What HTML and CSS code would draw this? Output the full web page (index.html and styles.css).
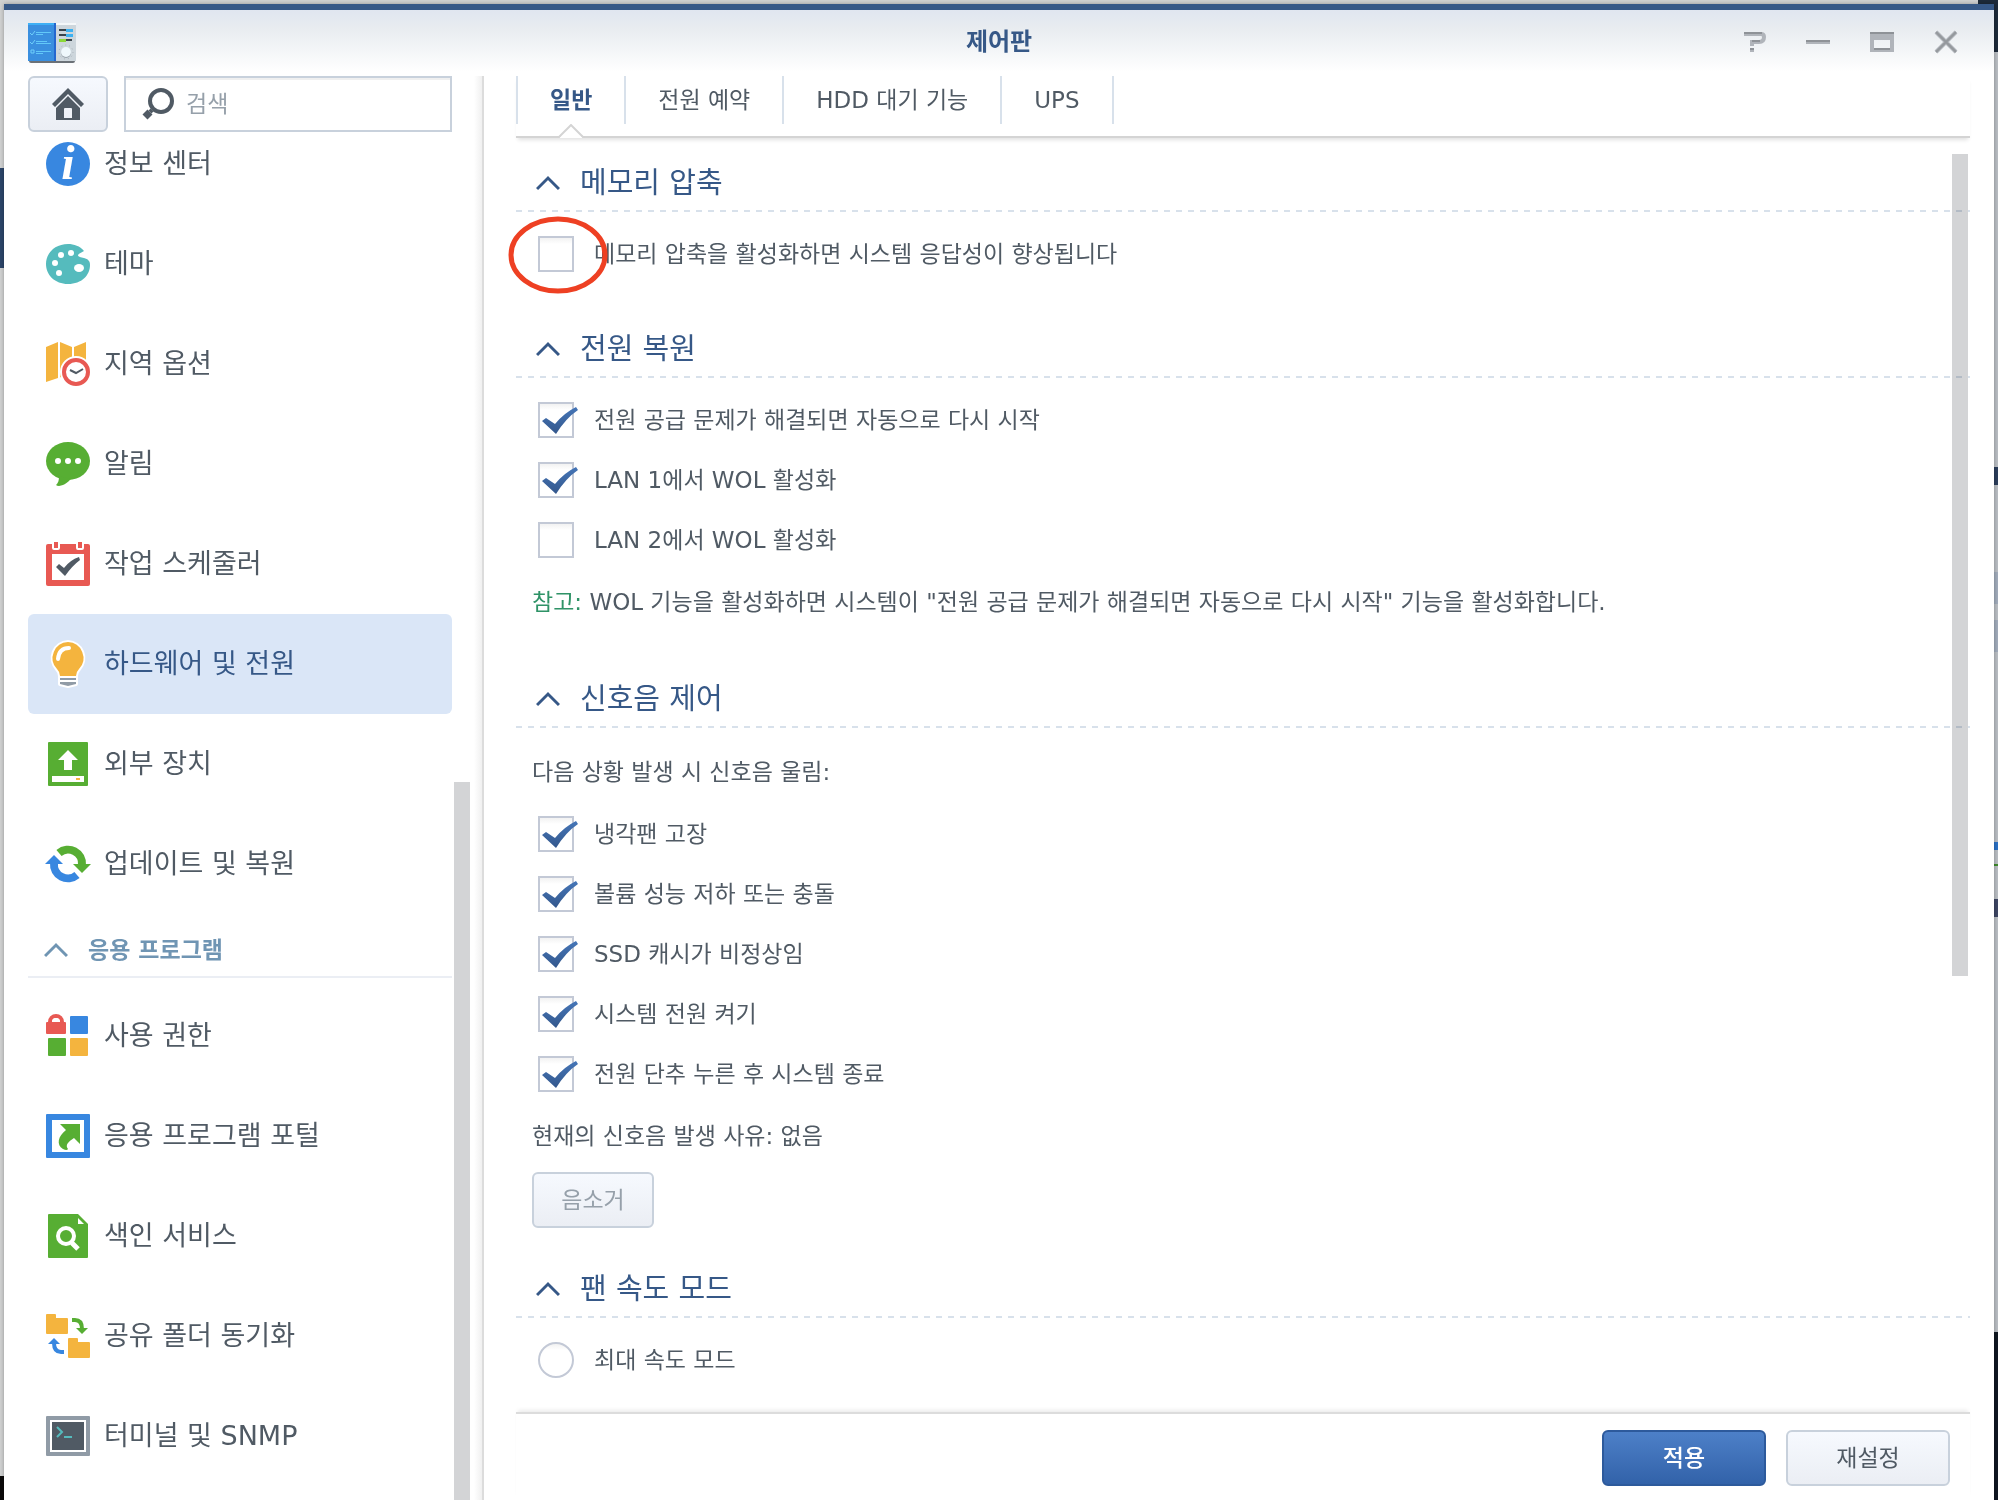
FILE: index.html
```
<!DOCTYPE html>
<html lang="ko">
<head>
    <meta charset="UTF-8">
    <meta name="viewport" content="width=device-width, initial-scale=1.0">
    <title>제어판</title>
    <link rel="stylesheet" href="styles.css">
</head>
<body>
    <div class="desktop">
        <div class="window">
            <header class="titlebar">
                <svg class="app-icon" width="48" height="38" viewBox="0 0 48 38">
                    <rect x="1" y="36" width="46" height="4" rx="2" fill="#6b7177"/>
                    <rect width="28" height="38" fill="#3a8fdf"/>
                    <rect width="28" height="2" fill="#3fb0f5"/>
                    <rect x="26" width="2" height="38" fill="#2467cf"/>
                    <rect x="28" width="20" height="38" fill="#cdd6dc"/>
                    <rect x="28" width="20" height="2" fill="#f5f8fa"/>
                    <path d="M2 10l2 2 3-4M2 19l2 2 3-4" fill="none" stroke="#6fd0fa"/>
                    <path d="M3 27h3v3h-3z" fill="none" stroke="#6fd0fa"/>
                    <path d="M8 9.500h15M8 11.500h7M8 18.500h11M8 20.500h15M8 28.500h15M8 30.500h7" stroke="#62c8f8"/>
                    <path d="M31 7h7M31 12h7M38 17h6" stroke="#39434b" stroke-width="2"/>
                    <path d="M38 7.500h7M38 12.500h7" stroke="#3db2f2" stroke-width="3"/>
                    <path d="M31 17.500h7" stroke="#8bd83a" stroke-width="3"/>
                    <circle cx="38" cy="29" r="7" fill="none" stroke="#a9b3ba" stroke-dasharray="1 3"/>
                    <circle cx="38" cy="30" r="5" fill="#9aa5ad"/>
                    <circle cx="38" cy="29" r="5" fill="#eff8fc"/>
                </svg>
                <h1 class="title">제어판</h1>
                <div class="window-controls">
                    <button type="button" aria-label="도움말">
                        <svg width="24" height="24" viewBox="0 0 24 24" fill="none">
                            <path d="M2 4h17q3 0 3 3v0q0 5-5 5h-7v4M10 18v4" stroke="#b0b4ba" stroke-width="4"/>
                            <path d="M2 3h18M10 11h8M8 19h4" stroke="#8e9297" stroke-width="2"/>
                        </svg>
                    </button>
                    <button type="button" aria-label="최소화">
                        <svg width="24" height="24" viewBox="0 0 24 24">
                            <path d="M0 12h24" stroke="#b0b4ba" stroke-width="4"/>
                            <path d="M0 11h24" stroke="#8e9297" stroke-width="2"/>
                        </svg>
                    </button>
                    <button type="button" aria-label="최대화">
                        <svg width="24" height="24" viewBox="0 0 24 24">
                            <path d="M0 2h24v20H0zM4 10v8h16v-8z" fill="#b0b4ba" fill-rule="evenodd"/>
                            <path d="M0 3h24M4 19h16" stroke="#8e9297" stroke-width="2"/>
                        </svg>
                    </button>
                    <button type="button" aria-label="닫기">
                        <svg width="24" height="24" viewBox="0 0 24 24" fill="none">
                            <path d="M2 2l20 20M22 2L2 22" stroke="#b0b4ba" stroke-width="4"/>
                            <path d="M2 2l20 20M22 2L2 22" stroke="#94989d" stroke-width="2"/>
                        </svg>
                    </button>
                </div>
            </header>

            <div class="body">
                <aside class="sidebar">
                    <div class="search-row">
                        <button type="button" class="btn home" aria-label="홈">
                            <svg width="32" height="32" viewBox="0 0 32 32" fill="#505a64">
                                <path d="M0 16L16 0L32 16L29 19L16 6L3 19z"/>
                                <path d="M4 20L16 8L28 20V32H4zM12 21v9h8v-9q0-1-1-1h-6q-1 0-1 1z" fill-rule="evenodd"/>
                            </svg>
                        </button>
                        <label class="search">
                            <svg width="32" height="32" viewBox="0 0 32 32" fill="none" stroke="#505a64">
                                <circle cx="19" cy="13" r="11" stroke-width="4"/>
                                <path d="M10 22L8 24" stroke-width="4"/>
                                <path d="M8 24L3 29" stroke-width="7"/>
                            </svg>
                            <input type="text" placeholder="검색" aria-label="검색">
                        </label>
                    </div>

                    <nav class="menu">
                        <a href="#" class="menu-item">
                            <svg class="icon" viewBox="0 0 44 44">
                                <circle cx="22" cy="22" r="22" fill="#3887e0"/>
                                <text x="22" y="37" class="info-letter">i</text>
                            </svg>
                            <span>정보 센터</span>
                        </a>
                        <a href="#" class="menu-item">
                            <svg class="icon" viewBox="0 0 44 44">
                                <path d="M38 9C34 4 28 2 22 2C9 2 0 11 0 22S9 42 22 42C36 42 44 33 44 23C44 19 42 17 38 16C35 15 32 15 32 13Q32 12 38 9z" fill="#55bbbd"/>
                                <g fill="#fff">
                                    <circle cx="9" cy="21" r="3"/>
                                    <circle cx="15" cy="13" r="3"/>
                                    <circle cx="25" cy="11" r="3"/>
                                    <circle cx="13" cy="31" r="3"/>
                                    <ellipse cx="33" cy="26" rx="5" ry="4"/>
                                </g>
                            </svg>
                            <span>테마</span>
                        </a>
                        <a href="#" class="menu-item">
                            <svg class="icon" viewBox="0 0 44 44">
                                <path d="M0 5L12 0V36L0 40zM14 0L26 5V40L14 35zM28 5L40 0V30H28z" fill="#f4b43e"/>
                                <path d="M14 36h14v8h-14z" fill="#fff"/>
                                <circle cx="30" cy="30" r="16" fill="#fff"/>
                                <circle cx="30" cy="30" r="12" fill="#fff" stroke="#e85953" stroke-width="4"/>
                                <path d="M24 28l6 3 7-4" fill="none" stroke="#505a64" stroke-width="2"/>
                            </svg>
                            <span>지역 옵션</span>
                        </a>
                        <a href="#" class="menu-item">
                            <svg class="icon" viewBox="0 0 44 44">
                                <ellipse cx="22" cy="19" rx="22" ry="19" fill="#57ae33"/>
                                <path d="M13 34C13 39 12 41 10 43Q11 44 13 44C19 43 22 40 25 37z" fill="#57ae33"/>
                                <path d="M12 19h0M22 19h0M32 19h0" stroke="#fff" stroke-width="6" stroke-linecap="round"/>
                            </svg>
                            <span>알림</span>
                        </a>
                        <a href="#" class="menu-item">
                            <svg class="icon" viewBox="0 0 44 44">
                                <rect y="2" width="44" height="42" rx="2" fill="#e85953"/>
                                <rect x="6" y="12" width="32" height="26" fill="#fff"/>
                                <path d="M6 0h8v6q0 2-2 2h-4q-2 0-2-2zM30 0h8v6q0 2-2 2h-4q-2 0-2-2z" fill="#fff"/>
                                <path d="M8 0h4v6h-4zM32 0h4v6h-4z" fill="#e85953"/>
                                <path d="M10 25L13 22L18 26Q24 18 33 15L34 18Q26 24 19 34z" fill="#505a64"/>
                            </svg>
                            <span>작업 스케줄러</span>
                        </a>
                        <a href="#" class="menu-item active">
                            <svg class="icon" viewBox="0 0 44 44">
                                <path d="M22 0a16 16 0 0 1 11 27q-3 3-3 7v8l-8 2-8-2v-8q0-4-3-7A16 16 0 0 1 22 0z" fill="#fff" stroke="#fff" stroke-width="4" stroke-linejoin="round"/>
                                <path d="M22 0a16 16 0 0 1 11 27q-3 3-3 7h-16q0-4-3-7A16 16 0 0 1 22 0z" fill="#f4b43e"/>
                                <path d="M12 17q1-11 11-11" fill="none" stroke="#fff" stroke-width="4" stroke-linecap="round"/>
                                <path d="M14 36h16v2h-16zM14 40h16v2l-8 2-8-2z" fill="#909ba6"/>
                            </svg>
                            <span>하드웨어 및 전원</span>
                        </a>
                        <a href="#" class="menu-item">
                            <svg class="icon" viewBox="0 0 44 44">
                                <rect x="2" width="40" height="44" rx="1" fill="#57ae33"/>
                                <path d="M22 8L32 18H26V28H18V18H12z" fill="#fff"/>
                                <path d="M6 34h32v6h-32z" fill="#fff"/>
                                <path d="M30 36h4v2h-4z" fill="#f4b43e"/>
                            </svg>
                            <span>외부 장치</span>
                        </a>
                        <a href="#" class="menu-item">
                            <svg class="icon" viewBox="0 0 44 44" fill="none" stroke-width="8">
                                <path d="M13 11A14 14 0 0 1 36 23" stroke="#57ae33"/>
                                <path d="M27 22H45L36 31z" fill="#57ae33"/>
                                <path d="M31 33A14 14 0 0 1 8 21" stroke="#3887e0"/>
                                <path d="M-1 22H17L8 13z" fill="#3887e0"/>
                            </svg>
                            <span>업데이트 및 복원</span>
                        </a>

                        <h2 class="menu-group">
                            <svg width="24" height="16" viewBox="0 0 24 16"><path d="M1 14L12 3L23 14"/></svg>
                            응용 프로그램
                        </h2>

                        <a href="#" class="menu-item">
                            <svg class="icon" viewBox="0 0 44 44">
                                <path d="M4 9V8a6 6 0 0 1 12 0v1" fill="none" stroke="#e85953" stroke-width="4"/>
                                <rect y="8" width="20" height="12" rx="1" fill="#e85953"/>
                                <path d="M6 8a4 4 0 0 1 8 0z" fill="#fff"/>
                                <rect x="24" y="2" width="18" height="18" rx="1" fill="#3887e0"/>
                                <rect x="2" y="24" width="18" height="18" rx="1" fill="#57ae33"/>
                                <rect x="24" y="24" width="18" height="18" rx="1" fill="#f4b43e"/>
                            </svg>
                            <span>사용 권한</span>
                        </a>
                        <a href="#" class="menu-item">
                            <svg class="icon" viewBox="0 0 44 44">
                                <rect width="44" height="44" rx="1" fill="#3887e0"/>
                                <rect x="6" y="6" width="32" height="32" fill="#fff"/>
                                <path d="M14 10H34V30L28 24C22 28 19 31 22 35Q21 37 17 35C10 31 12 22 20 16z" fill="#57ae33"/>
                            </svg>
                            <span>응용 프로그램 포털</span>
                        </a>
                        <a href="#" class="menu-item">
                            <svg class="icon" viewBox="0 0 44 44">
                                <path d="M3 0H32L42 10V43q0 1-1 1H3q-1 0-1-1V1q0-1 1-1z" fill="#57ae33"/>
                                <path d="M32 4V10H38z" fill="#fff"/>
                                <circle cx="20" cy="22" r="8" fill="none" stroke="#fff" stroke-width="4"/>
                                <path d="M26 29L32 35" stroke="#fff" stroke-width="5"/>
                            </svg>
                            <span>색인 서비스</span>
                        </a>
                        <a href="#" class="menu-item">
                            <svg class="icon" viewBox="0 0 44 44">
                                <path d="M1 0H9q1 0 1 1V4H21q1 0 1 1V19q0 1-1 1H1q-1 0-1-1V1q0-1 1-1zM23 24h8q1 0 1 1v3h11q1 0 1 1v14q0 1-1 1H23q-1 0-1-1V25q0-1 1-1z" fill="#f4b43e"/>
                                <path d="M26 6h3q7 0 7 9" fill="none" stroke="#57ae33" stroke-width="4"/>
                                <path d="M30 14H42L36 20z" fill="#57ae33"/>
                                <path d="M18 38h-3q-7 0-7-9" fill="none" stroke="#3887e0" stroke-width="4"/>
                                <path d="M2 30H14L8 24z" fill="#3887e0"/>
                            </svg>
                            <span>공유 폴더 동기화</span>
                        </a>
                        <a href="#" class="menu-item">
                            <svg class="icon" viewBox="0 0 44 44">
                                <rect y="2" width="44" height="40" rx="1" fill="#909ba6"/>
                                <rect x="4" y="6" width="36" height="32" fill="#fff"/>
                                <rect x="6" y="8" width="32" height="28" fill="#505a64"/>
                                <path d="M11 13l5 5-5 5M18 23h8" fill="none" stroke="#55bbbd" stroke-width="2"/>
                            </svg>
                            <span>터미널 및 SNMP</span>
                        </a>
                    </nav>
                    <div class="scroll-thumb"></div>
                </aside>

                <main class="content">
                    <nav class="tabs">
                        <a href="#" class="tab active">일반</a>
                        <a href="#" class="tab">전원 예약</a>
                        <a href="#" class="tab">HDD 대기 기능</a>
                        <a href="#" class="tab">UPS</a>
                    </nav>

                    <form class="panel" id="hardware">
                        <section>
                            <h2 class="section-title">
                                <svg width="24" height="16" viewBox="0 0 24 16"><path d="M1 14L12 3L23 14"/></svg>
                                메모리 압축
                            </h2>
                            <div class="fields">
                                <label class="option marked">
                                    <input type="checkbox">메모리 압축을 활성화하면 시스템 응답성이 향상됩니다
                                    <svg class="marker" width="100" height="78" viewBox="0 0 100 78">
                                        <ellipse cx="50" cy="39" rx="47" ry="36"/>
                                    </svg>
                                </label>
                            </div>
                        </section>

                        <section>
                            <h2 class="section-title">
                                <svg width="24" height="16" viewBox="0 0 24 16"><path d="M1 14L12 3L23 14"/></svg>
                                전원 복원
                            </h2>
                            <div class="fields">
                                <label class="option"><input type="checkbox" checked>전원 공급 문제가 해결되면 자동으로 다시 시작</label>
                                <label class="option"><input type="checkbox" checked>LAN 1에서 WOL 활성화</label>
                                <label class="option"><input type="checkbox">LAN 2에서 WOL 활성화</label>
                                <p><span class="note">참고:</span> WOL 기능을 활성화하면 시스템이 "전원 공급 문제가 해결되면 자동으로 다시 시작" 기능을 활성화합니다.</p>
                            </div>
                        </section>

                        <section>
                            <h2 class="section-title">
                                <svg width="24" height="16" viewBox="0 0 24 16"><path d="M1 14L12 3L23 14"/></svg>
                                신호음 제어
                            </h2>
                            <div class="fields">
                                <p>다음 상황 발생 시 신호음 울림:</p>
                                <label class="option"><input type="checkbox" checked>냉각팬 고장</label>
                                <label class="option"><input type="checkbox" checked>볼륨 성능 저하 또는 충돌</label>
                                <label class="option"><input type="checkbox" checked>SSD 캐시가 비정상임</label>
                                <label class="option"><input type="checkbox" checked>시스템 전원 켜기</label>
                                <label class="option"><input type="checkbox" checked>전원 단추 누른 후 시스템 종료</label>
                                <p>현재의 신호음 발생 사유: 없음</p>
                                <button type="button" class="btn mute" disabled>음소거</button>
                            </div>
                        </section>

                        <section>
                            <h2 class="section-title">
                                <svg width="24" height="16" viewBox="0 0 24 16"><path d="M1 14L12 3L23 14"/></svg>
                                팬 속도 모드
                            </h2>
                            <div class="fields">
                                <label class="option"><input type="radio" name="fan">최대 속도 모드</label>
                            </div>
                        </section>
                        <div class="scroll-thumb"></div>
                    </form>

                    <footer class="actions">
                        <button type="submit" form="hardware" class="btn primary">적용</button>
                        <button type="reset" form="hardware" class="btn">재설정</button>
                    </footer>
                </main>
            </div>
        </div>
    </div>
</body>
</html>
```
FILE: styles.css
```
* {
    box-sizing: border-box;
}
body {
    margin: 0;
    font-family: "DejaVu Sans", "Noto Sans CJK KR", sans-serif;
    font-size: 23px;
    line-height: 32px;
    color: #505a64;
}
h1, h2, p {
    margin: 0;
}
a {
    color: inherit;
    text-decoration: none;
}
button, input {
    font: inherit;
    color: inherit;
}

/* Desktop behind the window */
.desktop {
    height: 100vh;
    padding: 4px 4px 0;
    overflow: hidden;
    background:
        linear-gradient(#1d2a3a, #1d2a3a) right 0 top 0 / 20px 52px no-repeat,
        linear-gradient(#2c4569, #2c4569) left 0 top 168px / 4px 100px no-repeat,
        linear-gradient(#0b0a0a, #0b0a0a) left 0 top 1476px / 4px 24px no-repeat,
        linear-gradient(#2b3d5b, #2b3d5b) right 0 top 467px / 4px 18px no-repeat,
        linear-gradient(#a0abba, #a0abba) right 0 top 572px / 4px 32px no-repeat,
        linear-gradient(#a0abba, #a0abba) right 0 top 620px / 4px 32px no-repeat,
        linear-gradient(#2a70c4, #2a70c4) right 0 top 842px / 4px 8px no-repeat,
        linear-gradient(#3f8a2c, #3f8a2c) right 0 top 864px / 4px 2px no-repeat,
        linear-gradient(#3d4563, #3d4563) right 0 top 899px / 4px 18px no-repeat,
        linear-gradient(#101722, #101722) right 0 top 1332px / 4px 168px no-repeat,
        linear-gradient(#b9bdc2, #b9bdc2) right 0 top 52px / 4px 100% no-repeat,
        #d0d1d1;
}
.window {
    display: flex;
    flex-direction: column;
    height: 100%;
    border-top: 6px solid #365887;
    background: #fff linear-gradient(#e0e6f0, #e8ecf0 18px, #fff 62px) no-repeat;
    box-shadow: 0 0 4px rgba(0, 0, 0, 0.3);
}

.titlebar {
    display: grid;
    grid-template-columns: 1fr auto 1fr;
    align-items: center;
    height: 66px;
    padding: 0 24px 2px;
    flex-shrink: 0;
}
.app-icon {
    overflow: visible;
}
.title {
    font-size: 24px;
    color: #365887;
}
.window-controls {
    display: flex;
    justify-content: flex-end;
    gap: 40px;
    padding-right: 12px;
}
.window-controls button {
    display: flex;
    padding: 0;
    border: none;
    background: none;
    cursor: pointer;
}
.body {
    display: flex;
    flex: 1;
    min-height: 0;
}

/* Buttons */
.btn {
    height: 56px;
    min-width: 164px;
    border: 2px solid #c8d1dc;
    border-radius: 6px;
    background: linear-gradient(#f6f9fe, #ebeef4);
    cursor: pointer;
}
.btn:disabled {
    color: #96a0aa;
    cursor: default;
}
.btn.primary {
    border-color: #2d5a9c;
    background: linear-gradient(#4d80c8, #3262a9);
    color: #fff;
    font-weight: 500;
}
.btn.home {
    display: flex;
    align-items: center;
    justify-content: center;
    min-width: 80px;
}
.btn.mute {
    display: block;
    min-width: 122px;
    margin: 4px 0 -4px 16px;
}

/* Sidebar */
.sidebar {
    position: relative;
    width: 480px;
    flex-shrink: 0;
    padding: 0 30px 0 24px;
    overflow: hidden;
    border-right: 2px solid #dcdcdc;
    background: linear-gradient(to left, #f0f0f0, #fff 8px);
}
.search-row {
    display: flex;
    gap: 16px;
}
.search {
    display: flex;
    align-items: center;
    flex: 1;
    gap: 12px;
    padding: 0 16px;
    border: 2px solid #c8d1dc;
    background: #fff;
    box-shadow: inset 0 2px 0 #f0f0f0;
}
.search svg {
    flex-shrink: 0;
}
.search input {
    width: 100%;
    padding: 0;
    border: none;
    outline: none;
    background: none;
}
.search input::placeholder {
    color: #96a0aa;
}
.menu {
    margin-top: -18px;
}
.menu-item {
    display: flex;
    align-items: center;
    gap: 14px;
    height: 100px;
    padding: 0 18px;
    border-radius: 6px;
    font-size: 27px;
}
.menu-item.active {
    background: #dae6f7;
    color: #365887;
}
.icon {
    width: 44px;
    height: 44px;
    flex-shrink: 0;
    overflow: visible;
}
.info-letter {
    font: italic bold 48px "Liberation Serif", serif;
    text-anchor: middle;
    fill: #fff;
}
.menu-group {
    display: flex;
    align-items: center;
    gap: 20px;
    height: 64px;
    margin-bottom: 8px;
    padding: 10px 16px 0;
    border-bottom: 2px solid #ebeef4;
    font-size: 23px;
    color: #7095b3;
}
.menu-group svg, .section-title svg {
    fill: none;
    stroke: currentColor;
    stroke-width: 3;
}
.scroll-thumb {
    position: absolute;
    width: 16px;
    background: #d3d4d6;
    mix-blend-mode: multiply;
}
.sidebar .scroll-thumb {
    top: 706px;
    right: 12px;
    bottom: 0;
}

/* Content */
.content {
    display: flex;
    flex-direction: column;
    flex: 1;
    min-width: 0;
    padding: 0 24px 0 32px;
}
.tabs {
    display: flex;
    height: 62px;
    padding-bottom: 12px;
    border-bottom: 2px solid #d4d4d4;
    box-shadow: 0 4px 4px -2px rgba(0, 0, 0, 0.12);
    flex-shrink: 0;
}
.tab {
    position: relative;
    padding: 0 32px;
    border-right: 2px solid #d8e1eb;
    line-height: 48px;
}
.tab:first-child {
    border-left: 2px solid #d8e1eb;
}
.tab.active {
    font-weight: bold;
    color: #365887;
}
/* pointer on the tab line */
.tab.active::after {
    content: "";
    position: absolute;
    left: 50%;
    bottom: -14px;
    width: 28px;
    height: 14px;
    margin-left: -14px;
    background: url("data:image/svg+xml,%3Csvg xmlns='http://www.w3.org/2000/svg' viewBox='0 0 28 14'%3E%3Cpath d='M2 14L14 1L26 14z' fill='%23fff'/%3E%3Cpath d='M1 14L14 1L27 14' fill='none' stroke='%23d4d4d4' stroke-width='2'/%3E%3C/svg%3E") no-repeat;
}
.panel {
    position: relative;
    flex: 1;
    min-height: 0;
    margin: 4px 0 0 -8px;
    padding: 12px 0 0 8px;
    overflow: hidden;
}
.panel .scroll-thumb {
    top: 12px;
    right: 2px;
    height: 822px;
}
.section-title {
    display: flex;
    align-items: center;
    gap: 20px;
    height: 58px;
    padding-left: 20px;
    background: repeating-linear-gradient(to right, #d8e1eb 0 6px, transparent 6px 12px) bottom / 100% 2px no-repeat;
    font-size: 29px;
    font-weight: normal;
    color: #365887;
}
.fields {
    padding: 12px 0 36px;
}
.fields p {
    padding-left: 16px;
    line-height: 64px;
    white-space: nowrap;
}
.note {
    color: #2f9367;
}
.option {
    display: flex;
    align-items: center;
    gap: 20px;
    height: 60px;
    padding-left: 22px;
}
.option input {
    appearance: none;
    position: relative;
    width: 36px;
    height: 36px;
    margin: 0;
    flex-shrink: 0;
    border: 2px solid #c3c9d6;
    background: linear-gradient(#f2f2f2, #fff 6px);
}
.option input[type="radio"] {
    border-radius: 50%;
}
.option input:checked::after {
    content: "";
    position: absolute;
    top: 3px;
    left: 2px;
    width: 36px;
    height: 28px;
    background: linear-gradient(#4576b8, #33568a);
    clip-path: path("M0 14L4 11L13 17Q22 6 34 0L36 3Q24 11 14 27Z");
}
/* hand-drawn ring over the first checkbox */
.marked {
    position: relative;
}
.marker {
    position: absolute;
    top: -8px;
    left: -8px;
    fill: none;
    stroke: #ee4023;
    stroke-width: 5;
}
.actions {
    display: flex;
    justify-content: flex-end;
    gap: 20px;
    padding: 16px 20px 14px;
    border-top: 2px solid #dcdcdc;
    box-shadow: 0 -4px 4px -2px rgba(0, 0, 0, 0.08);
}
```
